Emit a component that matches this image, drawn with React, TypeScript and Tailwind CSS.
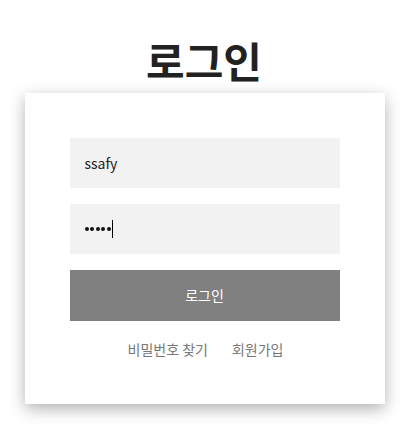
export default function App() {
  const font = { fontFamily: '"Noto Sans CJK KR", "Noto Sans", sans-serif' };
  return (
    <div className="w-[408px] h-[426px] bg-white flex flex-col items-center" style={font}>
      <h1 className="mt-[30px] text-[42px] leading-[60px] font-bold text-[#222222]">로그인</h1>
      <div className="mt-[3px] ml-[1px] w-[360px] h-[311px] bg-white shadow-[0_5px_15px_rgba(0,0,0,0.3)] px-[45px] pt-[45px] flex flex-col">
        <div className="h-[50px] bg-[#f2f2f2] flex items-center pl-[15px] text-[14px] text-[#222222]">ssafy</div>
        <div className="mt-[16px] h-[50px] bg-[#f2f2f2] flex items-center pl-[15px]">
          <div className="flex items-center gap-[1.6px]">
            <span className="w-[4px] h-[4px] rounded-full bg-[#111111]"></span>
            <span className="w-[4px] h-[4px] rounded-full bg-[#111111]"></span>
            <span className="w-[4px] h-[4px] rounded-full bg-[#111111]"></span>
            <span className="w-[4px] h-[4px] rounded-full bg-[#111111]"></span>
            <span className="w-[4px] h-[4px] rounded-full bg-[#111111]"></span>
          </div>
          <span className="inline-block w-[1.5px] h-[18px] bg-black ml-[1px]"></span>
        </div>
        <div className="mt-[16px] h-[51px] bg-[#808080] flex items-center justify-center text-[14px] text-white">로그인</div>
        <div className="mt-[18px] flex justify-center gap-[24px] text-[14px] text-[#777777] leading-[20px] pl-[2px]">
          <span>비밀번호 찾기</span>
          <span>회원가입</span>
        </div>
      </div>
    </div>
  );
}
